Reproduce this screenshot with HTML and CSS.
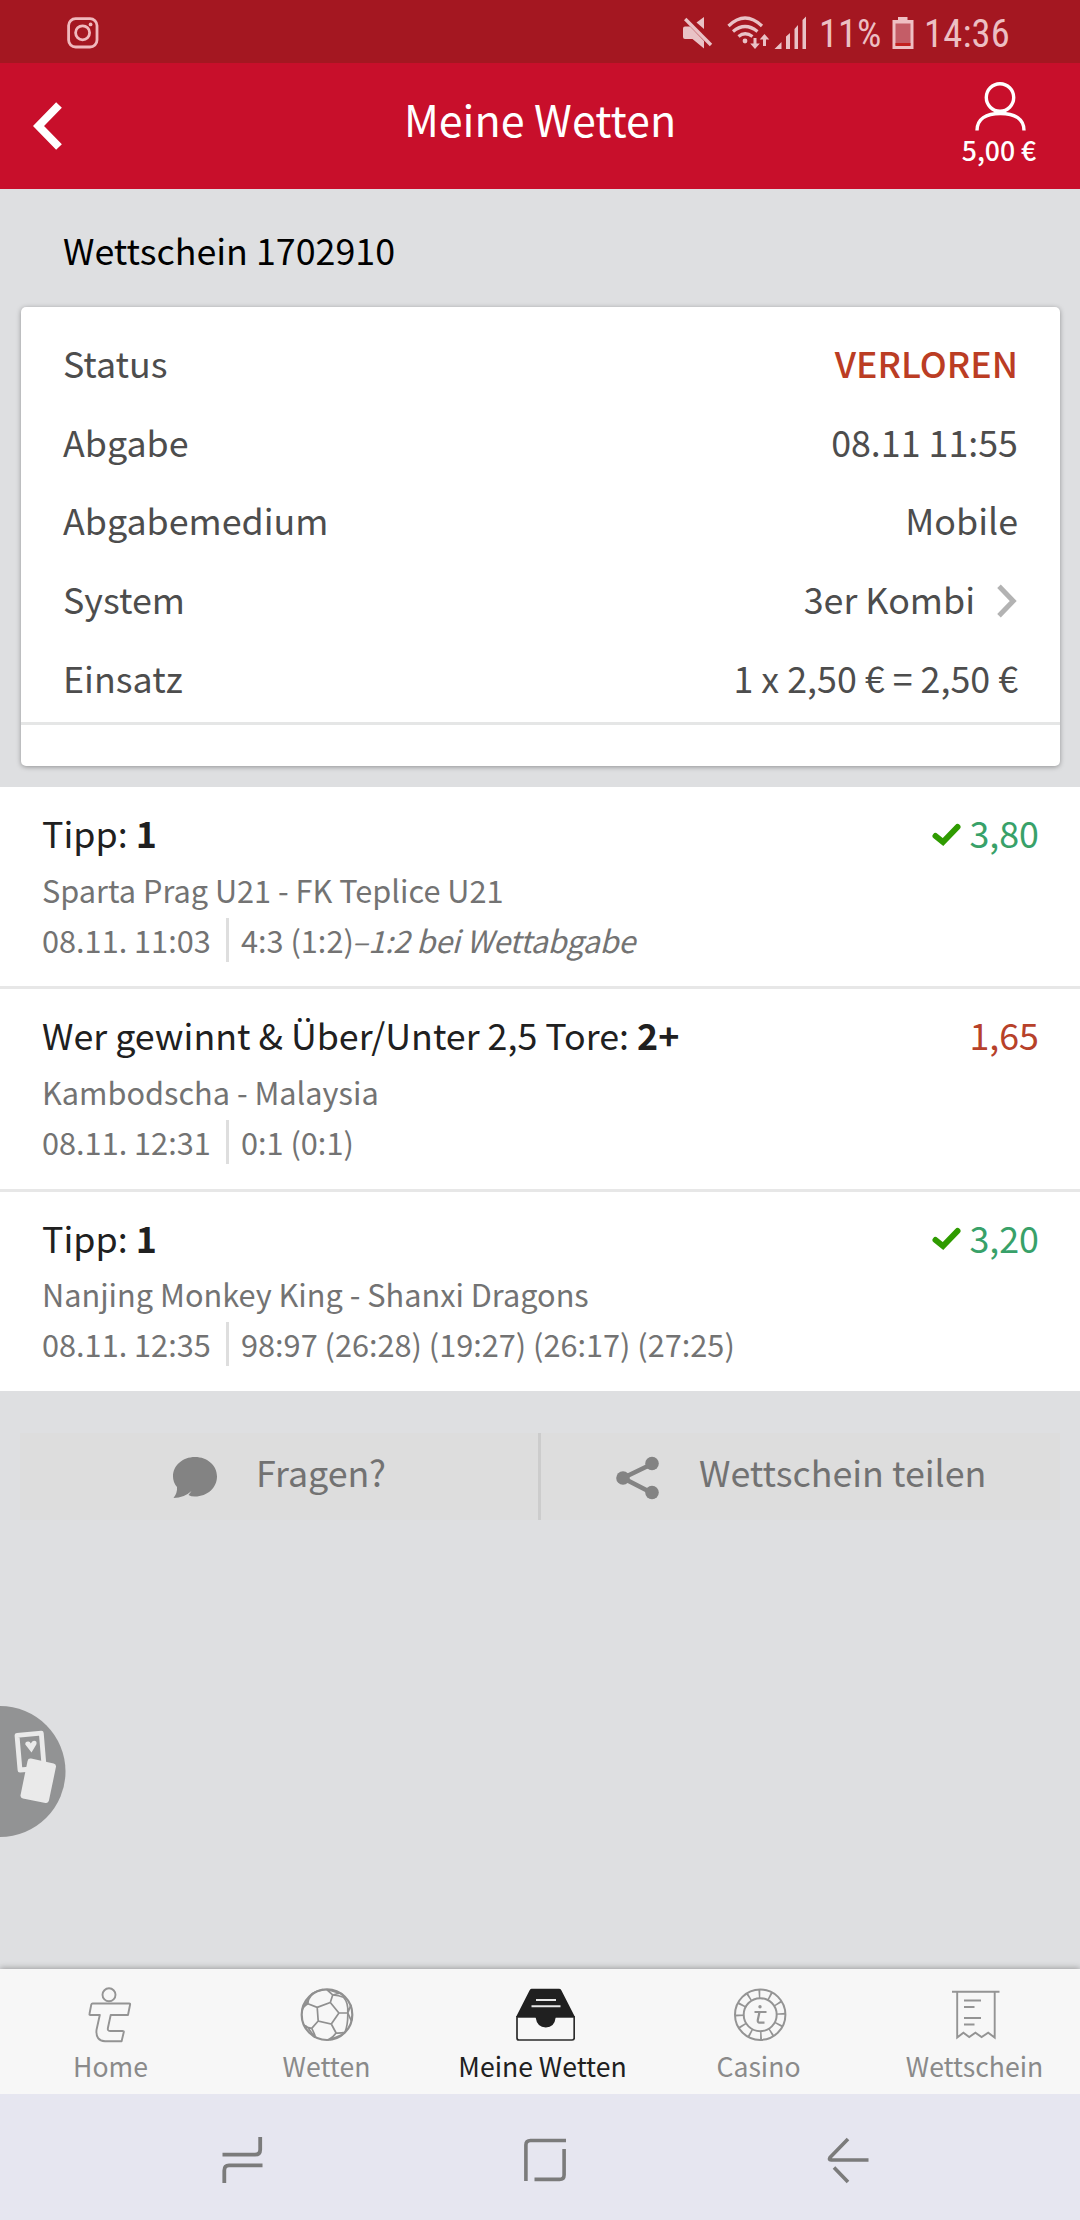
FILE: index.html
```html
<!DOCTYPE html>
<html lang="de">
<head>
<meta charset="utf-8">
<title>Meine Wetten</title>
<link rel="stylesheet" href="styles.css">
</head>
<body>
<div class="screen">
  <div class="statusbar">
    <svg class="status-insta" width="32" height="32" viewBox="0 0 32 32" fill="none" stroke="#f0b9bd">
      <rect x="1.6" y="1.6" width="28.4" height="28.4" rx="7" stroke-width="2.8"/>
      <circle cx="15.6" cy="15.8" r="7" stroke-width="2.8"/>
      <circle cx="23.6" cy="7.4" r="1.9" fill="#f0b9bd" stroke="none"/>
    </svg>
    <div class="status-right">
      <svg width="134" height="34" viewBox="0 0 134 34" fill="#e9c2c6">
        <path d="M0 12.5q0-2 2-2H7L21 25V32.5L9.500 23H2q-2 0-2-2z"/>
        <path d="M21 1V13L13.500 6.500z"/>
        <path d="M2.200 3L28 29" stroke="#e9c2c6" stroke-width="3.400"/>
        <g fill="none" stroke="#e9c2c6" stroke-width="3.200">
          <path d="M45.500 10Q62-6 79 10"/>
          <path d="M50 15.500Q62 5.500 74.500 15.500"/>
          <path d="M55.500 20.500Q62 15 69.500 20.500"/>
        </g>
        <circle cx="62" cy="25" r="2.400"/>
        <path d="M70.500 22h3v5.500h3.300L72 33l-4.800-5.500h3.300z"/>
        <path d="M80 30h3v-6.500h3.300L81.500 18l-4.800 5.500H80z"/>
        <path d="M91.500 33h7v-7zM103 20.500l4-3.500v16h-4zM111.500 13l3.500-4v24h-3.500zM119.500 4l3.500-3.500V33h-3.500z"/>
      </svg>
      <span class="status-text battery-level">11%</span>
      <svg width="22" height="34" viewBox="0 0 22 34">
        <path d="M6 1h9.500v3H21.500v29H.5V4H6z" fill="#efbfc3"/>
        <path d="M3.500 7.500h15v22h-15z" fill="#c45d67"/>
        <path d="M3.500 27h15v3h-15z" fill="#c3201f"/>
      </svg>
      <span class="status-text clock">14:36</span>
    </div>
  </div>

  <header class="header">
    <svg class="back" width="30" height="50" viewBox="0 0 30 50"><path d="M26 4L5.500 25L26 46" fill="none" stroke="#fff" stroke-width="8"/></svg>
    <h1 class="title">Meine Wetten</h1>
    <div class="account">
      <svg width="54" height="52" viewBox="0 0 54 52" fill="none" stroke="#fff" stroke-width="3.400">
        <circle cx="28" cy="16.500" r="13.700"/>
        <path d="M5 49.500C5 38 14 32.500 28.500 32.500S52 38 52 49.500"/>
      </svg>
      <span class="balance">5,00 €</span>
    </div>
  </header>

  <main class="content">
    <h2 class="slip-title">Wettschein 1702910</h2>
    <section class="card">
      <div class="rows">
        <div class="row"><span>Status</span><span class="lost">VERLOREN</span></div>
        <div class="row"><span>Abgabe</span><span>08.11 11:55</span></div>
        <div class="row"><span>Abgabemedium</span><span>Mobile</span></div>
        <div class="row"><span>System</span><span class="system">3er Kombi<svg width="22" height="36" viewBox="0 0 22 36"><path d="M3 3.300L17.200 18L3 32.700" fill="none" stroke="#b3b3b3" stroke-width="5"/></svg></span></div>
        <div class="row"><span>Einsatz</span><span>1 x 2,50 € = 2,50 €</span></div>
      </div>
      <div class="card-foot"></div>
    </section>

    <section class="bets">
      <article class="bet">
        <div class="bet-head"><span>Tipp: <b>1</b></span><span class="odds won"><svg width="29" height="24" viewBox="0 0 29 24"><path d="M3.500 13L11 19L25.500 4" fill="none" stroke="#2f9b00" stroke-width="6" stroke-linecap="round"/></svg>3,80</span></div>
        <div class="line">Sparta Prag U21 - FK Teplice U21</div>
        <div class="line"><span class="date">08.11. 11:03</span><span class="score">4:3 (1:2)<i>–1:2 bei Wettabgabe</i></span></div>
      </article>
      <article class="bet">
        <div class="bet-head"><span>Wer gewinnt &amp; Über/Unter 2,5 Tore: <b>2+</b></span><span class="odds missed">1,65</span></div>
        <div class="line">Kambodscha - Malaysia</div>
        <div class="line"><span class="date">08.11. 12:31</span><span class="score">0:1 (0:1)</span></div>
      </article>
      <article class="bet">
        <div class="bet-head"><span>Tipp: <b>1</b></span><span class="odds won"><svg width="29" height="24" viewBox="0 0 29 24"><path d="M3.500 13L11 19L25.500 4" fill="none" stroke="#2f9b00" stroke-width="6" stroke-linecap="round"/></svg>3,20</span></div>
        <div class="line">Nanjing Monkey King - Shanxi Dragons</div>
        <div class="line"><span class="date">08.11. 12:35</span><span class="score">98:97 (26:28) (19:27) (26:17) (27:25)</span></div>
      </article>
    </section>

    <div class="actions">
      <div class="action ask">
        <svg width="44" height="43" viewBox="0 0 44 43"><path d="M22 1C34.500 1 44 9.500 44 20.500S34.500 40.500 22 40.500Q18 40.500 15.500 39L18.500 35Q11 42 .5 42Q4.500 37 4 31Q0 26.500 0 20.500C0 9.500 9.500 1 22 1z" fill="#838383"/></svg>
        <span>Fragen?</span>
      </div>
      <div class="action share">
        <svg width="44" height="44" viewBox="0 0 44 44" fill="#838383"><path d="M36 8L7 22L36 37" fill="none" stroke="#838383" stroke-width="4.600"/><circle cx="7" cy="22" r="6.800"/><circle cx="36" cy="7.500" r="6.800"/><circle cx="36" cy="36.500" r="6.800"/></svg>
        <span>Wettschein teilen</span>
      </div>
    </div>

    <svg class="casino-tab" width="67" height="132" viewBox="0 0 67 132">
      <circle cx="0" cy="65.500" r="65.500" fill="#929394"/>
      <path d="M17 29.300L41.300 27.200L44.200 62L20 64z" fill="none" stroke="#eaeaea" stroke-width="4.800" stroke-linejoin="round"/>
      <path d="M31.500 46.500L25.300 38.500Q25 35.500 28 35.500Q30 35.300 30.800 37.500Q32 35 34 34.800Q37.500 35 36.300 38.500z" fill="#eaeaea"/>
      <path d="M30.500 55.500L53 60.500L46 94L23.500 89.500z" fill="#eaeaea" stroke="#eaeaea" stroke-width="6" stroke-linejoin="round"/>
    </svg>
  </main>

  <nav class="tabs">
    <a class="tab">
      <svg width="60" height="60" viewBox="0 0 60 60" fill="none" stroke="#949494" stroke-width="1.900" stroke-linejoin="round">
        <circle cx="29" cy="10.800" r="6.500"/>
        <path d="M12.600 19.500H49.200Q50.300 19.500 50.100 20.500L48 31H30.700L28 43.500Q27.200 47 30 47H42.500Q44 47 43.800 48L41.600 57.300H25Q15.500 56.500 16.500 46L19.800 31H10.300Q9.200 31 9.500 29.800L11.300 20.500Q11.600 19.500 12.600 19.500z"/>
      </svg>
      <span>Home</span>
    </a>
    <a class="tab">
      <svg width="60" height="60" viewBox="0 0 60 60" fill="none" stroke="#909090" stroke-width="1.700">
        <g transform="translate(5 4.700)">
          <circle cx="26" cy="26" r="25.300" stroke-width="2.200"/>
          <path d="M16.200 18.700L29.300 13.700L37.900 24.300L30.300 35.300L17.200 32.300zM16.200 18.700L6.900 15M29.300 13.700L31.700 6.300M37.900 24.300H46.800M30.300 35.300L35.100 44.300M17.200 32.300L10.700 39.700"/>
          <path d="M25.800 1L31.700 6.300Q38 6.500 42.500 8.500Q47.500 14 46.800 24.300L50.500 32.500M46.800 24.300L50 16M27 1L38.500 4.500L31.700 6.300"/>
          <path d="M46.800 24.300Q47 36 44 43.500Q40 44.500 35.100 44.300Q32 49 27 51.300M29 51L42 45.500M10.700 39.700Q14.500 47 14.500 49M14 49L7 39Q5 37 2.500 36.500M10.700 39.700L3.500 38M6.900 15Q1.500 18 1.200 22M6.900 15Q7 9 12 4.500M10 7L3.500 17M10 7Q12 3 22 1"/>
        </g>
      </svg>
      <span>Wetten</span>
    </a>
    <a class="tab active">
      <svg width="66" height="60" viewBox="0 0 66 60">
        <path d="M8 33V54Q8 56 10 56H63.200Q65.200 56 65.200 54V33z" fill="none" stroke="#2c2c2c" stroke-width="1.700"/>
        <path d="M22.500 4.700H50Q51.500 4.700 52.200 6L66 33H46.800Q45.500 43.500 36.800 43.500T26.500 33H7L20.500 6.500Q21.200 4.700 22.500 4.700z" fill="#202020"/>
        <path d="M27 16H47M22.500 22.300H51.500" stroke="#e8e8e8" stroke-width="2"/>
      </svg>
      <span>Meine Wetten</span>
    </a>
    <a class="tab">
      <svg width="60" height="60" viewBox="0 0 60 60" fill="none" stroke="#949494">
        <circle cx="32.200" cy="30.700" r="25.200" stroke-width="2"/>
        <circle cx="32.200" cy="30.700" r="16.500" stroke-width="2"/>
        <circle class="chip-marks" cx="32.200" cy="30.700" r="20.800" stroke-width="8.500" pathLength="120" stroke-dasharray="1.600 8.400" stroke-dashoffset=".8"/>
        <circle cx="32" cy="22.700" r="1.700" fill="#949494" stroke="none"/>
        <path d="M26.500 28H38.500M31.500 28L29.800 36Q29.500 38.700 31.500 38.700H36.500" stroke-width="2.200"/>
      </svg>
      <span>Casino</span>
    </a>
    <a class="tab">
      <svg width="60" height="60" viewBox="0 0 60 60" fill="none" stroke="#949494" stroke-width="1.900">
        <path d="M8 7.700H55.500M13.200 8V53.500L19.400 48.700L25.200 53L31.400 48.700L37.600 53L44.200 48.700L50.700 53.500V8M20 16.500H37M20 23H30.500M20 34H37M20 40.500H30.500"/>
      </svg>
      <span>Wettschein</span>
    </a>
  </nav>

  <div class="softkeys">
    <svg width="42" height="48" viewBox="0 0 42 48" fill="none" stroke="#7b7b7b" stroke-width="3.800"><path d="M.5 18.700H33Q38.200 18.700 38.200 13.500V1M40.500 29.300H7Q2.300 29.300 2.300 34.500V47"/></svg>
    <svg width="44" height="48" viewBox="0 0 44 48" fill="none" stroke="#7b7b7b" stroke-width="3.600"><path d="M1.900 45V9Q1.900 4.500 6.500 4.500H42M10.500 43.400H35.500Q40.100 43.400 40.100 39V13"/></svg>
    <svg width="42" height="48" viewBox="0 0 42 48" fill="none" stroke="#7b7b7b" stroke-width="3.600" stroke-linejoin="round"><path d="M21 3L3 21.500Q1.500 24 4 24H41.500M7 31.500L21 46"/></svg>
  </div>
</div>
</body>
</html>
```
FILE: styles.css
```css
* {
  box-sizing: border-box;
}

body {
  margin: 0;
  font-family: "Noto Sans CJK SC", "Noto Sans", sans-serif;
  font-size: 35.8px;
  color: #4d4d4d;
}

svg {
  display: block;
  flex: none;
}

.screen {
  width: 1080px;
  height: 2220px;
  display: flex;
  flex-direction: column;
  background: #dedfe1;
}

/* System status bar */
.statusbar {
  height: 63px;
  padding: 0 71px 0 67px;
  display: flex;
  align-items: center;
  justify-content: space-between;
  background: #a41721;
}

.status-insta {
  margin-top: 3px;
}

.status-right {
  display: flex;
  align-items: center;
  padding-top: 3px;
}

.status-text {
  font-family: Roboto, sans-serif;
  font-stretch: 75%;
  font-size: 38.5px;
  line-height: 40px;
  padding-top: 1px;
  color: #ecbfc3;
  white-space: nowrap;
}

.battery-level {
  width: 75px;
  padding-left: 2px;
}

.clock {
  width: 95px;
  padding-left: 10px;
  letter-spacing: 0.2px;
}

/* App header */
.header {
  height: 126px;
  padding: 0 33px;
  display: grid;
  grid-template-columns: 120px 1fr 120px;
  align-items: center;
  background: #c80f2b;
  color: #fff;
}

.title {
  margin: 0;
  padding-bottom: 16px;
  font-weight: 400;
  font-size: 43px;
  line-height: 60px;
  text-align: center;
}

.account {
  display: flex;
  flex-direction: column;
  align-items: center;
  padding: 0 0 5px 24px;
}

.balance {
  font-size: 26.6px;
  font-weight: 500;
  line-height: 34px;
  white-space: nowrap;
}

/* Bet slip */
.content {
  flex: 1;
  position: relative;
}

.slip-title {
  margin: 0;
  padding: 3px 63px 0;
  height: 118px;
  font-size: inherit;
  font-weight: 400;
  line-height: 115px;
  color: #000;
}

.card {
  height: 459px;
  margin: 0 20px 21px 21px;
  padding-top: 16px;
  border-radius: 5px;
  background: #fff;
  box-shadow: 0 1px 5px rgba(0, 0, 0, 0.35);
}

.rows {
  padding: 0 42px 6px;
  border-bottom: 3px solid #e5e6e6;
}

.row {
  height: 78.7px;
  line-height: 78.7px;
  display: flex;
  justify-content: space-between;
}

.lost {
  color: #bb3d24;
  font-weight: 500;
}

.system {
  display: flex;
  align-items: center;
  gap: 21px;
}

.system svg {
  margin-top: 5px;
}

.bets {
  background: #fff;
}

.bet {
  height: 202.3px;
  padding: 20px 41px 0 42px;
  border-bottom: 3px solid #e7e7e7;
}

.bet:last-child {
  height: 199.4px;
  border-bottom: 0;
}

.bet-head {
  display: flex;
  justify-content: space-between;
  margin-bottom: 7.7px;
  line-height: 50px;
  color: #202020;
}

.bet-head b {
  font-weight: 700;
}

.odds {
  display: flex;
  align-items: center;
  gap: 8px;
}

.odds svg {
  margin-top: 5px;
}

.won {
  color: #38a169;
}

.missed {
  color: #b7412a;
}

.line {
  display: flex;
  align-items: center;
  font-size: 30.7px;
  line-height: 50px;
  color: #737373;
}

.date {
  width: 187px;
  height: 44px;
  line-height: 44px;
  border-right: 3px solid #dedede;
}

.score {
  padding-left: 12px;
}

.score i {
  margin-left: -2px;
  letter-spacing: -0.3px;
}

.actions {
  display: flex;
  height: 87px;
  margin: 42px 20px 0;
  background: #ddd;
  color: #727272;
}

.action {
  display: flex;
  align-items: center;
  line-height: 77px;
}

.action svg {
  margin-top: 3px;
}

.action span {
  margin-bottom: 10px;
}

.ask {
  width: 521px;
  padding-left: 153px;
  gap: 39px;
  border-right: 3px solid #ccc;
}

.share {
  padding-left: 75px;
  gap: 39px;
}

/* Shortcut that sits over the page at the left edge */
.casino-tab {
  position: absolute;
  left: 0;
  top: 1517px;
}

/* Bottom tabs */
.tabs {
  position: relative;
  height: 125px;
  display: grid;
  grid-template-columns: repeat(5, 1fr);
  background: #f7f7f7;
  box-shadow: 0 -1px 6px rgba(0, 0, 0, 0.3);
}

.tab {
  display: flex;
  flex-direction: column;
  align-items: center;
  gap: 4px;
  padding: 15px 0 0 3px;
  font-size: 26.6px;
  line-height: 36px;
  color: #8a8a8a;
  white-space: nowrap;
}

.tab span {
  padding-left: 2px;
}

.active {
  color: #202020;
}

.chip-marks {
  transform: rotate(-92deg);
  transform-origin: 32.2px 30.7px;
}

/* System navigation keys */
.softkeys {
  position: relative;
  height: 126px;
  padding: 5px 211px 0 222px;
  display: flex;
  align-items: center;
  justify-content: space-between;
  background: #e6e6f0;
}
```
